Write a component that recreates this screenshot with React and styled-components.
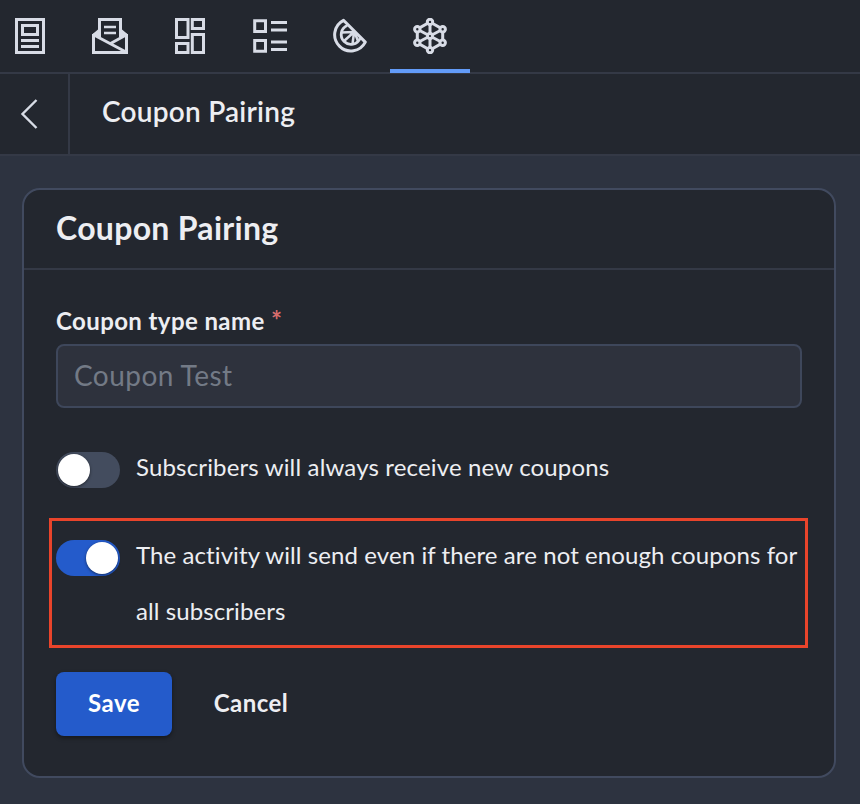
import { useState } from "react";
import styled, { createGlobalStyle } from "styled-components";

const GlobalStyle = createGlobalStyle`
  * {
    box-sizing: border-box;
  }

  body {
    margin: 0;
    background: #2d3340;
    color: #edeef2;
    font-family: Lato, "Liberation Sans", sans-serif;
  }
`;

const Page = styled.div`
  width: 860px;
  height: 804px;
  overflow: hidden;
  background: #2d3340;
`;

const Toolbar = styled.nav`
  display: flex;
  height: 74px;
  background: #23272f;
  border-bottom: 2px solid #343946;
`;

const Tab = styled.button`
  display: flex;
  justify-content: center;
  flex: none;
  width: ${({ $first }) => ($first ? "70px" : "80px")};
  height: 73px;
  padding: ${({ $first }) => ($first ? "18px 10px 0 0" : "18px 0 0")};
  background: none;
  border: none;
  border-bottom: 4px solid ${({ $active }) => ($active ? "#629bf8" : "transparent")};
  color: #d8dce6;
  cursor: pointer;

  svg {
    flex: none;
    width: 36px;
    height: 36px;
    fill: none;
    stroke: currentColor;
    stroke-width: 3;
  }
`;

const Header = styled.header`
  display: flex;
  height: 82px;
  background: #23272f;
  border-bottom: 2px solid #343946;
`;

const BackButton = styled.button`
  display: flex;
  width: 70px;
  padding: 24px 0 0 20px;
  background: none;
  border: none;
  border-right: 2px solid #343946;
  color: #d8dce6;
  cursor: pointer;
`;

const HeaderTitle = styled.h1`
  margin: 0;
  padding-left: 32px;
  font-size: 28px;
  font-weight: 600;
  line-height: 75px;
  letter-spacing: 0.24px;
`;

const Card = styled.section`
  width: 814px;
  height: 590px;
  margin: 32px 0 0 22px;
  background: #23272f;
  border: 2px solid #414a5f;
  border-radius: 18px;
`;

const CardTitle = styled.h2`
  height: 80px;
  margin: 0;
  padding-left: 32px;
  border-bottom: 2px solid #343946;
  font-size: 32px;
  font-weight: 700;
  line-height: 75px;
  letter-spacing: 0.3px;
`;

const Form = styled.form`
  padding: 36px 32px 0;
`;

const Label = styled.label`
  display: block;
  height: 38px;
  font-size: 24px;
  font-weight: 700;
  line-height: 30px;
  letter-spacing: 0.4px;
`;

const Required = styled.span`
  color: #d76c6c;
  font-size: 26px;
  line-height: 20px;
`;

const Input = styled.input`
  display: block;
  width: 746px;
  height: 64px;
  padding: 0 16px 3px;
  background: #2e323d;
  border: 2px solid #3e475b;
  border-radius: 8px;
  outline: none;
  color: #737a86;
  font-family: inherit;
  font-size: 28px;
  letter-spacing: 0.45px;

  &::placeholder {
    color: #737a86;
    opacity: 1;
  }
`;

const ToggleRow = styled.div`
  display: flex;
  gap: 16px;
  height: 56px;
  margin-top: 32px;
`;

const HighlightedRow = styled(ToggleRow)`
  width: 759px;
  height: 130px;
  margin: 22px 0 0 -7px;
  padding: 7px 0 0 4px;
  border: 3px solid #e9442b;
`;

const Switch = styled.button`
  display: flex;
  flex: none;
  justify-content: ${({ $on }) => ($on ? "flex-end" : "flex-start")};
  width: 64px;
  height: 36px;
  margin-top: 12px;
  padding: 2px;
  background: ${({ $on }) => ($on ? "#245bcb" : "#434c5e")};
  border: none;
  border-radius: 18px;
  cursor: pointer;
`;

const Knob = styled.span`
  width: 32px;
  height: 32px;
  background: #fff;
  border-radius: 50%;
  box-shadow: 0 1px 3px rgba(0, 0, 0, 0.5);
`;

const ToggleText = styled.p`
  margin: -1px 0 0;
  font-size: 24px;
  line-height: 56px;
  letter-spacing: ${({ $spacing }) => $spacing};
  white-space: pre-line;
`;

const Actions = styled.div`
  display: flex;
  gap: 10px;
  margin-top: 24px;
`;

const Button = styled.button`
  height: 64px;
  width: ${({ $primary }) => ($primary ? "116px" : "138px")};
  padding: 0 0 3px;
  background: ${({ $primary }) => ($primary ? "#245bcb" : "none")};
  border: none;
  border-radius: 8px;
  box-shadow: ${({ $primary }) => ($primary ? "0 2px 4px rgba(0, 0, 0, 0.4)" : "none")};
  color: ${({ $primary }) => ($primary ? "#fff" : "#edeef2")};
  font-family: inherit;
  font-size: 24px;
  font-weight: 700;
  letter-spacing: 0.45px;
  cursor: pointer;
`;

const ArticleIcon = () => (
  <svg viewBox="0 0 36 36">
    <path d="M4.5 1.5h27v33h-27zM10.5 7.5h15v9h-15zM9 22.5h18M9 28.5h18" />
  </svg>
);

const MailIcon = () => (
  <svg viewBox="0 0 36 36">
    <path d="M1.5 16v18.5h33V16M7.5 19V1.5h21V19" />
    <path d="M1 16.5 34 34M35 16.5 18.5 25.5" />
    <path d="M6 11.5v8L0 16.5zM30 11.5v8l6-3z" fill="currentColor" stroke="none" />
    <path d="M12 9h12M12 15h12" strokeWidth="2.5" />
  </svg>
);

const LayoutIcon = () => (
  <svg viewBox="0 0 36 36">
    <path d="M4.5 1.5h11.5v18h-11.5zM20.3 1.5h11.2v9h-11.2zM4.5 25.5h11.5v9h-11.5zM20.3 16.5h11.2v18h-11.2z" />
  </svg>
);

const ListIcon = () => (
  <svg viewBox="0 0 36 36">
    <path d="M2.7 2.7h10.8v10.8H2.7zM2.7 22.5h10.8v10.8H2.7zM19 4.5h16M19 12h16M19 24h16M19 31.5h16" />
  </svg>
);

const CitrusIcon = () => (
  <svg viewBox="0 0 36 36">
    <path d="M11.5 2.3A16.2 16.2 0 1 0 33.3 24.1Z" strokeLinejoin="round" />
    <path d="M15.2 7.5A9.8 9.8 0 1 0 28.1 20.2" strokeWidth="2.8" />
    <path d="M22 14 9.5 14.5M21.5 14.5 12 23M22 14.5 20.5 26M22.5 14 26 23" strokeWidth="2.5" />
  </svg>
);

const nodes = [
  [18, 3.9],
  [30.7, 11.2],
  [30.7, 24.8],
  [18, 32.1],
  [5.3, 24.8],
  [5.3, 11.2],
];

const NetworkIcon = () => (
  <svg viewBox="0 0 36 36">
    <path
      d="M18 4 30.7 11.2v13.6L18 32 5.3 24.8V11.2ZM18 4v28M5.3 11.2l25.4 13.6M30.7 11.2 5.3 24.8"
      strokeWidth="3"
    />
    {nodes.map(([x, y]) => (
      <circle key={`${x}-${y}`} cx={x} cy={y} r="2.7" fill="#23272f" strokeWidth="3" />
    ))}
    <circle cx="18" cy="18" r="2.5" fill="#23272f" strokeWidth="2.8" />
  </svg>
);

const tabs = [
  { name: "article", Icon: ArticleIcon },
  { name: "mail", Icon: MailIcon },
  { name: "layout", Icon: LayoutIcon },
  { name: "list", Icon: ListIcon },
  { name: "citrus", Icon: CitrusIcon },
  { name: "network", Icon: NetworkIcon },
];

function App() {
  const [activeTab, setActiveTab] = useState("network");
  const [alwaysNew, setAlwaysNew] = useState(false);
  const [sendAnyway, setSendAnyway] = useState(true);

  return (
    <Page>
      <GlobalStyle />
      <Toolbar>
        {tabs.map(({ name, Icon }, index) => (
          <Tab
            key={name}
            $first={index === 0}
            $active={name === activeTab}
            onClick={() => setActiveTab(name)}
          >
            <Icon />
          </Tab>
        ))}
      </Toolbar>
      <Header>
        <BackButton>
          <svg width="20" height="32" viewBox="0 0 20 32" fill="none" stroke="currentColor" strokeWidth="2.4">
            <path d="M16.5 2 2.5 16l14 14" />
          </svg>
        </BackButton>
        <HeaderTitle>Coupon Pairing</HeaderTitle>
      </Header>
      <Card>
        <CardTitle>Coupon Pairing</CardTitle>
        <Form onSubmit={(e) => e.preventDefault()}>
          <Label htmlFor="name">
            Coupon type name <Required>*</Required>
          </Label>
          <Input id="name" placeholder="Coupon Test" />
          <ToggleRow>
            <Switch type="button" $on={alwaysNew} onClick={() => setAlwaysNew(!alwaysNew)}>
              <Knob />
            </Switch>
            <ToggleText $spacing="0.16px">Subscribers will always receive new coupons</ToggleText>
          </ToggleRow>
          <HighlightedRow>
            <Switch type="button" $on={sendAnyway} onClick={() => setSendAnyway(!sendAnyway)}>
              <Knob />
            </Switch>
            <ToggleText $spacing="0.09px">
              {"The activity will send even if there are not enough coupons for\nall subscribers"}
            </ToggleText>
          </HighlightedRow>
          <Actions>
            <Button $primary>Save</Button>
            <Button type="button">Cancel</Button>
          </Actions>
        </Form>
      </Card>
    </Page>
  );
}

export default App;
